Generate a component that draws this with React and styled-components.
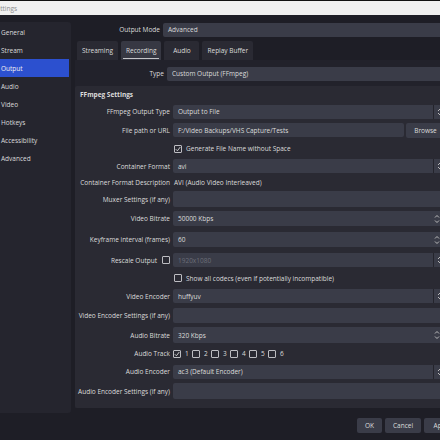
import React from "react";
import styled, { createGlobalStyle } from "styled-components";

const GlobalStyle = createGlobalStyle`
  html, body {
    margin: 0;
    padding: 0;
    background: #1e1e26;
    overflow: hidden;
  }
  body {
    font-family: "Open Sans", "DejaVu Sans", sans-serif;
    font-size: 6.5px;
    color: #dcdcdc;
  }
`;

const NAV = ["General", "Stream", "Output", "Audio", "Video", "Hotkeys", "Accessibility", "Advanced"];
const TABS = ["Streaming", "Recording", "Audio", "Replay Buffer"];

export default function App() {
  return (
    <>
      <GlobalStyle />
      <Window>
        <TitleBar>
          <TitleText>Settings</TitleText>
        </TitleBar>
        <Body>
          <Sidebar>
            {NAV.map((n) => (
              <NavItem key={n} $active={n === "Output"}>
                {n}
              </NavItem>
            ))}
          </Sidebar>
          <Main>
            <TopRow>
              <TopLabel $w={85}>Output Mode</TopLabel>
              <Field $h={14}>Advanced</Field>
            </TopRow>
            <Tabs>
              {TABS.map((t) => (
                <Tab key={t} $active={t === "Recording"}>
                  {t}
                </Tab>
              ))}
            </Tabs>
            <Pane>
              <TopRow>
                <TopLabel $w={89}>Type</TopLabel>
                <Field $h={14}>Custom Output (FFmpeg)</Field>
              </TopRow>
              <Group>
                <GroupTitle>FFmpeg Settings</GroupTitle>

                <Row $h={18}>
                  <Label>FFmpeg Output Type</Label>
                  <Combo>Output to File</Combo>
                </Row>
                <Row $h={19}>
                  <Label>File path or URL</Label>
                  <Field $h={14}>F:/Video Backups/VHS Capture/Tests</Field>
                  <Button $w={39}>Browse</Button>
                </Row>
                <Row $h={18}>
                  <Label />
                  <Check checked label="Generate File Name without Space" />
                </Row>
                <Row $h={17}>
                  <Label>Container Format</Label>
                  <Combo>avi</Combo>
                </Row>
                <Row $h={16}>
                  <Label>Container Format Description</Label>
                  <Plain>AVI (Audio Video Interleaved)</Plain>
                </Row>
                <Row $h={17.5}>
                  <Label>Muxer Settings (if any)</Label>
                  <Field $h={16} />
                </Row>
                <Row $h={21}>
                  <Label>Video Bitrate</Label>
                  <Spin>50000 Kbps</Spin>
                </Row>
                <Row $h={21.5}>
                  <Label>Keyframe interval (frames)</Label>
                  <Spin>60</Spin>
                </Row>
                <Row $h={19}>
                  <Label>
                    Rescale Output <Box />
                  </Label>
                  <Combo disabled>1920x1080</Combo>
                </Row>
                <Row $h={17.5}>
                  <Label />
                  <Check label="Show all codecs (even if potentially incompatible)" />
                </Row>
                <Row $h={18.5}>
                  <Label>Video Encoder</Label>
                  <Combo>huffyuv</Combo>
                </Row>
                <Row $h={20}>
                  <Label>Video Encoder Settings (if any)</Label>
                  <Field $h={15} />
                </Row>
                <Row $h={19.5}>
                  <Label>Audio Bitrate</Label>
                  <Spin $h={16}>320 Kbps</Spin>
                </Row>
                <Row $h={17.5}>
                  <Label>Audio Track</Label>
                  <Tracks>
                    {[1, 2, 3, 4, 5, 6].map((n) => (
                      <Check key={n} checked={n === 1} label={String(n)} />
                    ))}
                  </Tracks>
                </Row>
                <Row $h={18.5}>
                  <Label>Audio Encoder</Label>
                  <Combo>ac3 (Default Encoder)</Combo>
                </Row>
                <Row $h={20}>
                  <Label>Audio Encoder Settings (if any)</Label>
                  <Field $h={16} />
                </Row>
              </Group>
            </Pane>
          </Main>
        </Body>
        <Footer>
          <Button $w={25}>OK</Button>
          <Button $w={36}>Cancel</Button>
          <Button $w={36}>Apply</Button>
        </Footer>
      </Window>
    </>
  );
}

function Combo({ children, disabled }) {
  return (
    <Field $h={14} $disabled={disabled}>
      <Value>{children}</Value>
      <ArrowArea>
        <svg width="6" height="8" viewBox="0 0 6 8">
          <path d="M1 3 L3 1 L5 3 M1 5 L3 7 L5 5" fill="none" stroke="#c8c8c8" strokeWidth="0.9" />
        </svg>
      </ArrowArea>
    </Field>
  );
}

function Spin({ children, $h = 15 }) {
  return (
    <Field $h={$h}>
      <Value>{children}</Value>
      <SpinArea>
        <svg width="6" height="10" viewBox="0 0 6 10">
          <path d="M1 3.5 L3 1.5 L5 3.5 M1 6.5 L3 8.5 L5 6.5" fill="none" stroke="#c8c8c8" strokeWidth="0.9" />
        </svg>
      </SpinArea>
    </Field>
  );
}

function Box({ checked }) {
  return (
    <BoxFrame>
      {checked && (
        <svg width="6" height="6" viewBox="0 0 6 6">
          <path d="M0.8 3.2 L2.4 4.8 L5.3 1" fill="none" stroke="#dcdcdc" strokeWidth="0.9" />
        </svg>
      )}
    </BoxFrame>
  );
}

function Check({ checked, label }) {
  return (
    <CheckWrap>
      <Box checked={checked} />
      <span>{label}</span>
    </CheckWrap>
  );
}

const Window = styled.div`
  width: 460px;
  height: 440px;
  display: flex;
  flex-direction: column;
`;

const TitleBar = styled.div`
  height: 14px;
  border-top: 1px solid #111;
  background: #f0f0f0;
  color: #8c8c8c;
  display: flex;
  align-items: center;
`;

const TitleText = styled.span`
  margin-left: -7px;
`;

const Body = styled.div`
  display: flex;
  gap: 4px;
  padding: 7px 7px 0 0;
  height: 398px;
  box-sizing: border-box;
`;

const Sidebar = styled.div`
  width: 71px;
  flex-shrink: 0;
  height: 391px;
  padding-top: 1px;
  box-sizing: border-box;
  background: #25252e;
  border-radius: 0 3px 3px 0;
`;

const NavItem = styled.div`
  height: 18px;
  width: 69px;
  display: flex;
  align-items: center;
  padding-left: 1px;
  box-sizing: border-box;
  background: ${(p) => (p.$active ? "#2c50cf" : "transparent")};
  color: ${(p) => (p.$active ? "#f2f2f2" : "#dcdcdc")};
`;

const Main = styled.div`
  flex: 1;
  display: flex;
  flex-direction: column;
`;

const TopRow = styled.div`
  display: flex;
  align-items: center;
  height: 15px;
  padding-right: 4px;
`;

const TopLabel = styled.div`
  width: ${(p) => p.$w}px;
  flex-shrink: 0;
  margin-right: 3px;
  text-align: right;
`;

const Tabs = styled.div`
  display: flex;
  gap: 3px;
  margin-top: 4px;
  padding-left: 2px;
  height: 19px;
`;

const Tab = styled.div`
  position: relative;
  min-width: 35px;
  padding: 0 5px;
  box-sizing: border-box;
  display: flex;
  align-items: center;
  justify-content: center;
  background: ${(p) => (p.$active ? "#373843" : "#2a2a33")};
  border-radius: 2px 2px 0 0;
  &::after {
    content: "";
    display: ${(p) => (p.$active ? "block" : "none")};
    position: absolute;
    left: 2px;
    right: 2px;
    bottom: 1px;
    height: 1.5px;
    background: #c4c4c8;
  }
`;

const Pane = styled.div`
  background: #22222b;
  padding-top: 6px;
  display: flex;
  flex-direction: column;
`;

const Group = styled.div`
  margin-top: 5px;
  background: #2a2a33;
  border-radius: 2px;
  padding: 0 8px 7px 5px;
`;

const GroupTitle = styled.div`
  height: 16.5px;
  display: flex;
  align-items: center;
  padding-top: 0.5px;
  box-sizing: border-box;
  font-weight: 700;
`;

const Row = styled.div`
  display: flex;
  align-items: center;
  height: ${(p) => p.$h}px;
  gap: 2px;
`;

const Label = styled.div`
  width: 90px;
  flex-shrink: 0;
  margin-right: 1px;
  display: flex;
  align-items: center;
  justify-content: flex-end;
  gap: 5px;
  white-space: nowrap;
`;

const Field = styled.div`
  flex: 1;
  min-width: 0;
  height: ${(p) => p.$h}px;
  display: flex;
  align-items: center;
  padding-left: 5px;
  box-sizing: border-box;
  background: #3a3c48;
  border-radius: 2px;
  white-space: nowrap;
  color: ${(p) => (p.$disabled ? "#6c6e79" : "#dcdcdc")};
`;

const Value = styled.span`
  flex: 1;
`;

const ArrowArea = styled.div`
  width: 12px;
  height: 100%;
  display: flex;
  align-items: center;
  padding-left: 3px;
  box-sizing: border-box;
  border-left: 1px solid #24242c;
`;

const SpinArea = styled.div`
  width: 12px;
  height: 100%;
  display: flex;
  align-items: center;
  padding-left: 1px;
  box-sizing: border-box;
`;

const Plain = styled.div`
  padding-left: 1px;
  white-space: nowrap;
`;

const Button = styled.div`
  height: 15px;
  width: ${(p) => p.$w}px;
  flex-shrink: 0;
  box-sizing: border-box;
  display: flex;
  align-items: center;
  justify-content: center;
  background: #3a3c48;
  border-radius: 2px;
`;

const BoxFrame = styled.span`
  width: 8px;
  height: 8px;
  box-sizing: border-box;
  border: 1px solid #bdbdc2;
  border-radius: 1px;
  display: inline-flex;
  align-items: center;
  justify-content: center;
  flex-shrink: 0;
`;

const CheckWrap = styled.div`
  display: inline-flex;
  align-items: center;
  gap: 4px;
  margin-left: 1px;
  white-space: nowrap;
`;

const Tracks = styled.div`
  display: flex;
  gap: 2.3px;
  margin-left: -1px;
`;

const Footer = styled.div`
  display: flex;
  justify-content: flex-end;
  gap: 3px;
  margin-top: 5px;
`;
